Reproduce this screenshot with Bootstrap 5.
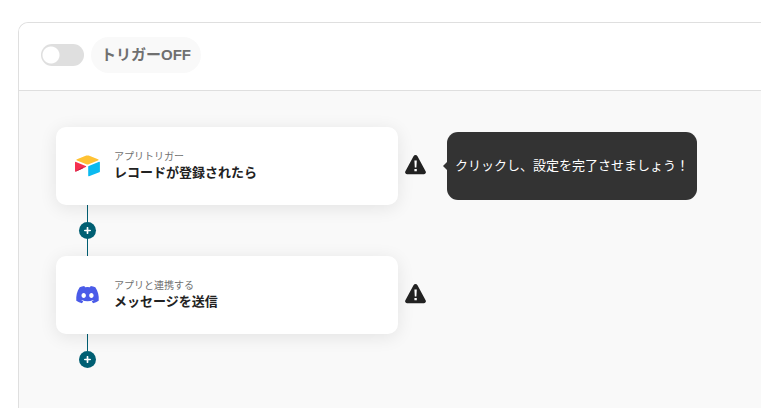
<!DOCTYPE html>
<html lang="ja">
<head>
<meta charset="utf-8">
<meta name="viewport" content="width=device-width, initial-scale=1">
<title>トリガー設定</title>
<link href="https://cdn.jsdelivr.net/npm/bootstrap@5.3.0/dist/css/bootstrap.min.css" rel="stylesheet">
<style>
  body { font-family: "Liberation Sans", "Noto Sans CJK JP", sans-serif; color: #222; background: #fff; }
  .flow-page { padding: 22px 0 0 18px; }
  .flow-panel { border: 1px solid #dfdfdf; border-width: 1px 0 0 1px; border-radius: 10px 0 0 0; background: #f9f9f9; overflow: hidden; }
  .flow-header { padding: 14px 22px 17px; gap: 7px; background: #fff; border-bottom: 1px solid #dfdfdf; }
  .flow-header .form-switch { min-height: 0; }
  .flow-header .form-check-input {
    width: 43px; height: 22px; border: 0; background-color: #dfdfdf; cursor: pointer;
    --bs-form-switch-bg: none; background-image: radial-gradient(circle at 10px 11px, #fff 8px, transparent 9px);
  }
  .flow-header .form-check-input:checked { background-color: #005f73; background-image: radial-gradient(circle at 33px 11px, #fff 8px, transparent 9px); }
  .trigger-state { height: 36px; padding: 0 10px; font-size: 15px; line-height: 36px; color: #707070; background: #f9f9f9; cursor: pointer; }
  .flow-canvas { padding: 36px 37px; }
  .step-row { gap: 7px; }
  .step-card { flex: 0 1 342px; height: 78px; padding: 0 19px; gap: 14px; border: 0; border-radius: 10px; box-shadow: 0 3px 18px rgba(0, 0, 0, .09); text-align: left; color: #222; background: #fff; }
  .step-kind { font-size: 10px; line-height: 14px; color: #707070; }
  .step-title { font-size: 13px; line-height: 18px; }
  .step-link { height: 51px; width: 63px; background: linear-gradient(#005f73, #005f73) center / 1px 100% no-repeat; }
  .step-link-last { height: 34px; padding-top: 17px; background-size: 1px 17px; background-position: top center; }
  .add-step { width: 17px; height: 17px; background: #005f73; }
  .step-tip { margin-left: 14px; height: 68px; padding: 0 8px; font-size: 13px; border-radius: 11px; background: #333; color: #fff; }
  .step-tip::before { content: ""; position: absolute; right: 100%; top: 50%; transform: translateY(-50%); border: 4px solid transparent; border-right-color: #333; border-left: 0; }
</style>
<script src="https://cdn.jsdelivr.net/npm/bootstrap@5.3.0/dist/js/bootstrap.bundle.min.js"></script>
</head>
<body>
<main class="flow-page d-flex min-vh-100">
  <section class="flow-panel flex-grow-1">
    <header class="flow-header d-flex align-items-center">
      <div class="form-check form-switch p-0 m-0 d-flex">
        <input class="form-check-input m-0 float-none" type="checkbox" role="switch" id="trigger">
      </div>
      <label class="trigger-state rounded-pill fw-bold" for="trigger">トリガーOFF</label>
    </header>

    <div class="flow-canvas">
      <div class="step-row d-flex align-items-center">
        <button type="button" class="step-card d-flex align-items-center">
          <svg width="25" height="22" viewBox="0 0 25 22" aria-hidden="true">
            <path fill="#ffc233" d="M11.3.6 2 4.2c-.8.3-.8.9 0 1.2l9.3 3.8c.8.3 1.6.3 2.4 0L23 5.4c.8-.3.8-.9 0-1.2L13.7.6c-.8-.3-1.6-.3-2.4 0Z"/>
            <path fill="#0cbaf0" d="M13.2 11.6v9.1c0 .5.4.7.8.6l10.3-4.1c.4-.1.6-.4.6-.7V7.400c0-.5-.4-.7-.8-.6L13.800 10.900c-.4.1-.6.4-.6.7Z"/>
            <path fill="#f5304f" d="m10.8 12.1-3.1 1.5L1 16.6c-.4.2-1 0-1-.5V7.5c0-.5.5-.8 1-.6l9.700 4c.6.3.6.9.1 1.200Z"/>
            <path fill="#bd1f48" d="M7.700 12 .3 16.400c.2.3.5.3.7.2l6.700-3Z"/>
          </svg>
          <span>
            <span class="step-kind d-block">アプリトリガー</span>
            <span class="step-title d-block fw-bold">レコードが登録されたら</span>
          </span>
        </button>
        <button type="button" class="btn p-0 border-0 d-flex" aria-label="設定が未完了です">
          <svg width="21" height="22" viewBox="0 0 21 22" aria-hidden="true">
            <path fill="#222" d="M8.500 1.200c.9-1.500 3.100-1.500 4 0l8.100 15.100c.8 1.400-.1 2.900-1.700 2.900H2.100c-1.600 0-2.500-1.500-1.700-2.900L8.500 1.200Z"/>
            <path fill="#fff" d="M9.400 5.600h2.400l-.4 7H9.800zM9.400 14h2.400v2.300H9.400z"/>
          </svg>
        </button>
        <div class="step-tip position-relative d-flex align-items-center" role="tooltip">クリックし、設定を完了させましょう！</div>
      </div>

      <div class="step-link d-flex align-items-center justify-content-center">
        <button type="button" class="add-step btn rounded-circle border-0 p-0 d-flex align-items-center justify-content-center" aria-label="ステップを追加">
          <svg width="7" height="7" viewBox="0 0 7 7" stroke="#fff" stroke-width="1.7" stroke-linecap="round" aria-hidden="true"><path d="M3.5.8v5.4M.8 3.5h5.4"/></svg>
        </button>
      </div>

      <div class="step-row d-flex align-items-center">
        <button type="button" class="step-card d-flex align-items-center">
          <svg width="25" height="22" viewBox="0 0 25 22" aria-hidden="true">
            <path fill="#4a5be8" d="M20.300 3.300A18 18 0 0 0 15.700 1.900l-.7 1.400a17 17 0 0 0-5 0l-.7-1.400a18 18 0 0 0-4.600 1.400C1.800 7.700 1 11.900 1.300 16.700A18 18 0 0 0 7 19.200l1.200-1.900-1.900-1 .5-.4c3.600 1.700 7.800 1.700 11.400 0l.5.4-1.900 1 1.200 1.900a18 18 0 0 0 5.700-2.500c.5-5.100-.8-9.700-3.400-13.400ZM8.700 13.900c-1.200 0-2.200-1.100-2.200-2.400s1-2.400 2.200-2.400 2.200 1.100 2.200 2.400-1 2.400-2.200 2.400Zm7.700 0c-1.200 0-2.200-1.100-2.200-2.400s1-2.400 2.200-2.400 2.200 1.100 2.200 2.400-1 2.400-2.200 2.400Z"/>
          </svg>
          <span>
            <span class="step-kind d-block">アプリと連携する</span>
            <span class="step-title d-block fw-bold">メッセージを送信</span>
          </span>
        </button>
        <button type="button" class="btn p-0 border-0 d-flex" aria-label="設定が未完了です">
          <svg width="21" height="22" viewBox="0 0 21 22" aria-hidden="true">
            <path fill="#222" d="M8.500 1.200c.9-1.500 3.100-1.500 4 0l8.100 15.100c.8 1.400-.1 2.900-1.700 2.900H2.100c-1.600 0-2.500-1.500-1.700-2.900L8.500 1.200Z"/>
            <path fill="#fff" d="M9.400 5.600h2.400l-.4 7H9.800zM9.400 14h2.400v2.300H9.400z"/>
          </svg>
        </button>
      </div>

      <div class="step-link step-link-last d-flex align-items-start justify-content-center">
        <button type="button" class="add-step btn rounded-circle border-0 p-0 d-flex align-items-center justify-content-center" aria-label="ステップを追加">
          <svg width="7" height="7" viewBox="0 0 7 7" stroke="#fff" stroke-width="1.7" stroke-linecap="round" aria-hidden="true"><path d="M3.5.8v5.4M.8 3.5h5.4"/></svg>
        </button>
      </div>
    </div>
  </section>
</main>
</body>
</html>
